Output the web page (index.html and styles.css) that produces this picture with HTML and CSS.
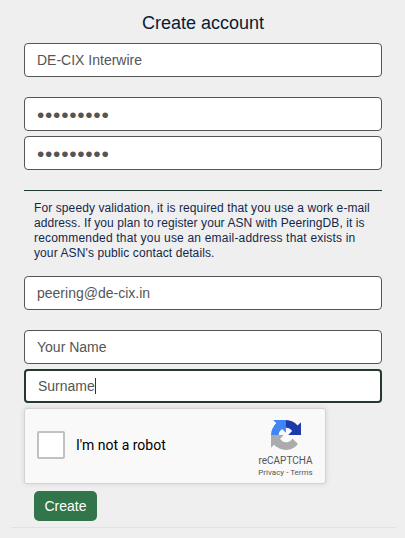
FILE: index.html
```html
<!DOCTYPE html>
<html lang="en">

<head>
    <meta charset="UTF-8">
    <title>Create account</title>
    <link rel="stylesheet" href="styles.css">
</head>

<body>

    <form class="signup">
        <h2>Create account</h2>

        <input class="field" type="text" name="username" value="DE-CIX Interwire">

        <div class="group">
            <input class="field password" type="password" name="password" value="peering12">
            <input class="field password" type="password" name="password_v" value="peering12">
        </div>

        <p class="notice">For speedy validation, it is required that you use a work e-mail<br>
            <span class="tight">address. If you plan to register your ASN with PeeringDB, it is</span><br>
            <span class="wide">recommended that you use an email-address that exists in</span><br>
            your ASN's public contact details.</p>

        <input class="field" type="text" name="email" value="peering@de-cix.in">

        <div class="group">
            <input class="field" type="text" name="first_name" value="Your Name">
            <div class="active-field">
                <input class="field active" type="text" name="last_name" value="Surname">
                <span class="caret"></span>
            </div>
        </div>

        <div class="captcha">
            <span class="captcha-box"></span>
            <span class="captcha-label">I'm not a robot</span>
            <div class="captcha-brand">
                <svg class="captcha-logo" viewBox="0 0 64 64">
                    <path fill="#1c3aa9" d="M64 31.955l-.033-1.37V4.687l-7.16 7.16C50.948 4.674 42.033.093 32.05.093c-10.4 0-19.622 4.96-25.458 12.64l11.736 11.86a15.55 15.55 0 0 1 4.754-5.334c2.05-1.6 4.952-2.906 8.968-2.906.485 0 .86.057 1.135.163 4.976.393 9.288 3.14 11.828 7.124l-8.307 8.307L64 31.953"/>
                    <path fill="#4285f4" d="M31.862.094l-1.37.033H4.594l7.16 7.16C4.58 13.147 0 22.06 0 32.046c0 10.4 4.96 19.622 12.64 25.458L24.5 45.768a15.55 15.55 0 0 1-5.334-4.754c-1.6-2.05-2.906-4.952-2.906-8.968 0-.485.057-.86.163-1.135.393-4.976 3.14-9.288 7.124-11.828l8.307 8.307L31.86.095"/>
                    <path fill="#ababab" d="M.001 32.045l.033 1.37v25.898l7.16-7.16c5.86 7.173 14.774 11.754 24.76 11.754 10.4 0 19.622-4.96 25.458-12.64l-11.736-11.86a15.55 15.55 0 0 1-4.754 5.334c-2.05 1.6-4.952 2.906-8.968 2.906-.485 0-.86-.057-1.135-.163-4.976-.393-9.288-3.14-11.828-7.124l8.307-8.307c-10.522.04-22.4.066-27.295-.005"/>
                </svg>
                <span class="captcha-name">reCAPTCHA</span>
                <span class="captcha-links">Privacy - Terms</span>
            </div>
        </div>

        <button class="create-btn" type="button">Create</button>
    </form>

    <hr class="footer-line">

</body>

</html>
```

FILE: styles.css
```css
* {
    box-sizing: border-box;
}

body {
    margin: 0;
    height: 538px;
    overflow: hidden;
    background: #efefef;
    font-family: "Liberation Sans", Arial, sans-serif;
}

.signup {
    display: flex;
    flex-direction: column;
    width: 358px;
    margin-left: 24px;
    padding-top: 11px;
}

h2 {
    margin: 0 0 8px;
    font-size: 18px;
    font-weight: normal;
    line-height: 24px;
    text-align: center;
    color: #071b35;
}

.field {
    display: block;
    width: 100%;
    height: 34px;
    margin: 0;
    padding: 0 12px;
    border: 1px solid #555;
    border-radius: 4px;
    background: #fff;
    color: #555;
    font-family: inherit;
    font-size: 14px;
    outline: none;
}

.password {
    padding-top: 2px;
    font-size: 21px;
    letter-spacing: 0.7px;
}

.group {
    display: flex;
    flex-direction: column;
    gap: 5px;
    margin-top: 20px;
}

.notice {
    height: 86px;
    margin: 20px 0 0;
    padding: 10px 0 0 10px;
    border-top: 1px solid #22392f;
    font-size: 12px;
    line-height: 15px;
    letter-spacing: 0.1px;
    white-space: nowrap;
    color: #14284b;
}

.tight {
    letter-spacing: 0.07px;
}

.wide {
    letter-spacing: 0.19px;
}

.active-field {
    position: relative;
}

.active {
    border: 2px solid #223b2c;
}

.caret {
    position: absolute;
    top: 9px;
    left: 71px;
    width: 1px;
    height: 16px;
    background: #333;
}

.captcha {
    display: flex;
    align-items: center;
    width: 302px;
    height: 76px;
    margin-top: 5px;
    padding: 0 12px 2px;
    border: 1px solid #d3d3d3;
    border-radius: 3px;
    background: #f9f9f9;
    box-shadow: 0 0 4px 1px rgba(0, 0, 0, 0.08);
    font-family: Roboto, sans-serif;
}

.captcha-box {
    width: 28px;
    height: 28px;
    border: 2px solid #c1c1c1;
    border-radius: 2px;
    background: #fff;
}

.captcha-label {
    margin-left: 11px;
    font-size: 14px;
    color: #000;
}

.captcha-brand {
    display: flex;
    flex-direction: column;
    align-items: center;
    width: 55px;
    margin-left: auto;
    padding-top: 6px;
    color: #555;
}

.captcha-logo {
    width: 30px;
    height: 30px;
    margin: 2px 0 4px 1px;
}

.captcha-name {
    font-size: 10px;
    line-height: 13px;
}

.captcha-links {
    font-size: 8px;
    line-height: 11px;
    white-space: nowrap;
}

.create-btn {
    align-self: flex-start;
    width: 63px;
    height: 30px;
    margin: 7px 0 0 10px;
    padding: 0;
    border: none;
    border-radius: 5px;
    background: #32754a;
    color: #fff;
    font-family: inherit;
    font-size: 14px;
}

.footer-line {
    width: 385px;
    margin: 6px 0 0 11px;
    border: none;
    border-top: 1px solid #e2e2e2;
}
```
